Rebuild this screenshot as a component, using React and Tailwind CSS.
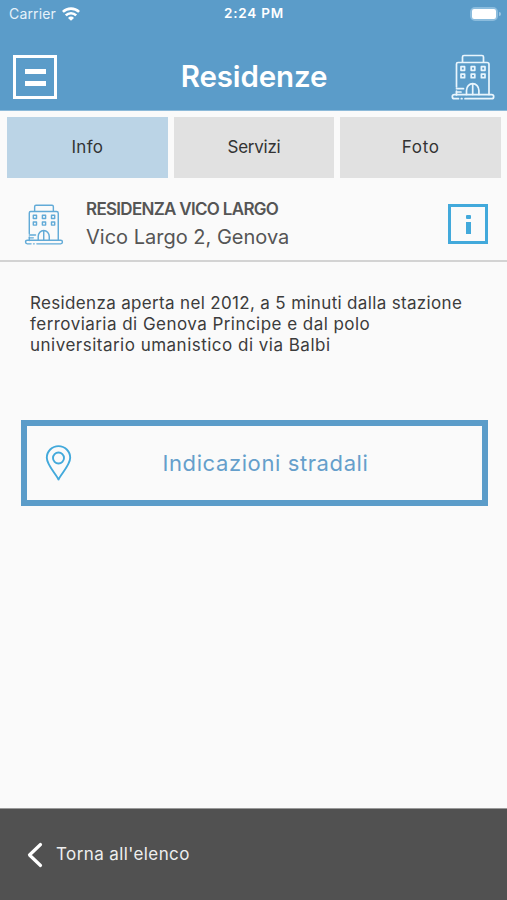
import React from "react";

function Building({ className }) {
  return (
    <svg className={className} viewBox="0 0 44 46" fill="none" stroke="currentColor" strokeLinejoin="round" strokeLinecap="round">
      <path d="M11.5 8V3Q11.5 1.5 13 1.5H31Q32.5 1.5 32.5 3V8" />
      <path d="M5.5 33V10Q5.5 8.5 7 8.5H36Q38 8.5 38 10.5V40.5M5.5 37V41" />
      <path d="M10 12.7h3.6v3.6H10zM20.2 12.7h3.6v3.6h-3.6zM30.4 12.7H34v3.6h-3.6zM10 20.1h3.6v3.6H10zM20.2 20.1h3.6v3.6h-3.6zM30.4 20.1H34v3.6h-3.6z" />
      <path d="M15.5 40.5V36.5a6.2 6.8 0 0 1 12.4 0V40.5M21.7 30V40.5" />
      <path d="M5.5 34.7H12.5M5.5 38H10" />
      <path d="M7.5 44.7H3.3Q1.3 44.7 1.3 42.7Q1.3 40.7 3.3 40.7H40.7Q42.7 40.7 42.7 42.7Q42.7 44.7 40.7 44.7H14M10.3 44.7H11" />
    </svg>
  );
}

function Wifi() {
  return (
    <svg className="h-[14px] w-[18px]" viewBox="0 0 18 14" fill="none" stroke="white" strokeWidth="2.6">
      <path d="M.9 4.9a11.6 11.6 0 0 1 16.2 0M3.8 8.4a7.4 7.4 0 0 1 10.4 0" />
      <path d="M9 13.8 6 10.9a4.1 4.1 0 0 1 6 0Z" fill="white" stroke="none" />
    </svg>
  );
}

function Tab({ active, children, spacing }) {
  return (
    <button className={`flex h-[61px] flex-1 items-center justify-center pt-px text-[17px] text-[#333] ${spacing} ${active ? "bg-[#bbd4e6]" : "bg-[#e1e1e1]"}`}>
      {children}
    </button>
  );
}

export default function App() {
  return (
    <div className="flex h-[900px] w-[507px] flex-col overflow-hidden bg-[#fafafa] font-['Inter',sans-serif]">
      <header className="h-[111px] shrink-0 border-b border-[#8dbad9] bg-[#5b9cc9] text-white">
        <div className="grid h-[27px] grid-cols-3 items-center pl-[9px] pr-[6px]">
          <div className="flex items-center gap-[6px] text-[14px] tracking-[0.15px] text-[#e6f2fa]">
            <span>Carrier</span>
            <Wifi />
          </div>
          <span className="pr-[2px] text-center text-[13.5px] font-semibold tracking-[0.8px]">2:24 PM</span>
          <div className="flex items-center justify-end gap-px">
            <span className="flex h-[14px] w-[28px] rounded-[5px] border-2 border-[#8bbcdd]">
              <span className="flex-1 rounded-[2px] bg-white" />
            </span>
            <span className="h-[4px] w-[2px] rounded-r-full bg-[#9cc6e2]" />
          </div>
        </div>
        <div className="flex items-center justify-between pl-[13px] pr-[12px] pt-[27px]">
          <button className="flex h-[44px] w-[44px] flex-col items-center justify-center gap-[7px] border-[3px] border-white" aria-label="Menu">
            <span className="h-[5px] w-[21px] bg-white" />
            <span className="h-[5px] w-[21px] bg-white" />
          </button>
          <h1 className="-mt-[2px] text-[29.5px] font-semibold leading-[44px] tracking-[-0.15px]">Residenze</h1>
          <Building className="h-[46px] w-[44px] text-[#e9f5fd] stroke-[1.7]" />
        </div>
      </header>

      <nav className="flex shrink-0 gap-[6px] pl-[7px] pr-[6px] pt-[6px]">
        <Tab active spacing="tracking-[0.3px]">Info</Tab>
        <Tab spacing="tracking-[-0.25px]">Servizi</Tab>
        <Tab spacing="tracking-[0.7px]">Foto</Tab>
      </nav>

      <section className="flex h-[84px] shrink-0 items-start border-b-2 border-[#d3d3d3] pl-[24px] pr-[19px] pt-[18px]">
        <Building className="mt-[8px] h-[41px] w-[40px] text-[#61aad7] stroke-[1.6]" />
        <div className="ml-[22px] flex-1 text-[#555]">
          <h2 className="text-[17px] font-semibold leading-[26px] tracking-[-0.7px]">RESIDENZA VICO LARGO</h2>
          <p className="text-[20px] leading-[30px]">Vico Largo 2, Genova</p>
        </div>
        <button className="mt-[8px] flex h-[40px] w-[40px] flex-col items-center justify-center gap-[3px] border-[3px] border-[#42a9db]" aria-label="Informazioni">
          <span className="h-[4px] w-[5px] rounded-[1px] bg-[#42a9db]" />
          <span className="h-[12px] w-[5px] bg-[#42a9db]" />
        </button>
      </section>

      <main className="flex-1">
        <p className="whitespace-nowrap pl-[30px] pt-[31px] text-[17px] leading-[21px] text-[#3c3c3c]">
          <span className="block tracking-[0.34px]">Residenza aperta nel 2012, a 5 minuti dalla stazione</span>
          <span className="block tracking-[0.46px]">ferroviaria di Genova Principe e dal polo</span>
          <span className="block tracking-[0.49px]">universitario umanistico di via Balbi</span>
        </p>
        <button className="ml-[20.5px] mt-[64px] flex h-[86px] w-[467px] items-center border-[6px] border-[#5b9cc9] pl-[18px]">
          <svg className="h-[36px] w-[27px]" viewBox="0 0 27 36" fill="none" stroke="#42a9db" strokeWidth="1.9" strokeLinejoin="round">
            <path d="M13.5 34.5C11 29 1.8 20 1.8 12.8a11.7 11.7 0 0 1 23.4 0C25.2 20 16 29 13.5 34.5Z" />
            <circle cx="13.5" cy="13" r="5.5" />
          </svg>
          <span className="ml-[91px] text-[22px] tracking-[0.6px] text-[#659fcb]">Indicazioni stradali</span>
        </button>
      </main>

      <footer className="flex h-[92px] shrink-0 items-center border-t border-[#999] bg-[#515151] pl-[27px] text-[#eee]">
        <svg className="h-[26px] w-[16px]" viewBox="0 0 16 26" fill="none" stroke="white" strokeWidth="3.2" strokeLinecap="round" strokeLinejoin="round">
          <path d="M13.5 2.5 2.5 13 13.5 23.5" />
        </svg>
        <span className="ml-[13px] text-[17px] tracking-[0.4px]">Torna all'elenco</span>
      </footer>
    </div>
  );
}
